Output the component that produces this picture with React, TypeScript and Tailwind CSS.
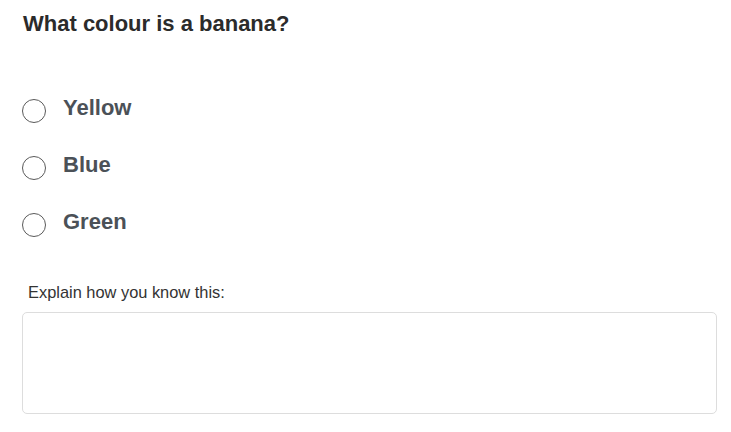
export default function App() {
  const options = ['Yellow', 'Blue', 'Green'];

  return (
    <div className="min-h-screen bg-white px-[22px] pt-[9px] font-['Liberation_Sans',Arial,sans-serif]">
      <h1 className="text-[22px] font-bold leading-[30px] text-[#2b2b2b] pl-px">What colour is a banana?</h1>

      <div className="mt-[57px] flex flex-col gap-[33px]">
        {options.map((opt) => (
          <label key={opt} className="flex items-center h-6">
            <span className="w-6 h-6 rounded-full border border-[#5a5a5a] bg-white shrink-0 mt-[5px]" />
            <span className="ml-[17px] text-[22px] font-bold text-[#4b5157] leading-6">{opt}</span>
          </label>
        ))}
      </div>

      <p className="mt-[48px] pl-[6px] text-[16.4px] leading-5 text-[#333]">Explain how you know this:</p>
      <textarea className="mt-[10px] block w-[695px] h-[102px] rounded-[5px] border border-[#ddd] resize-none outline-none" />
    </div>
  );
}
